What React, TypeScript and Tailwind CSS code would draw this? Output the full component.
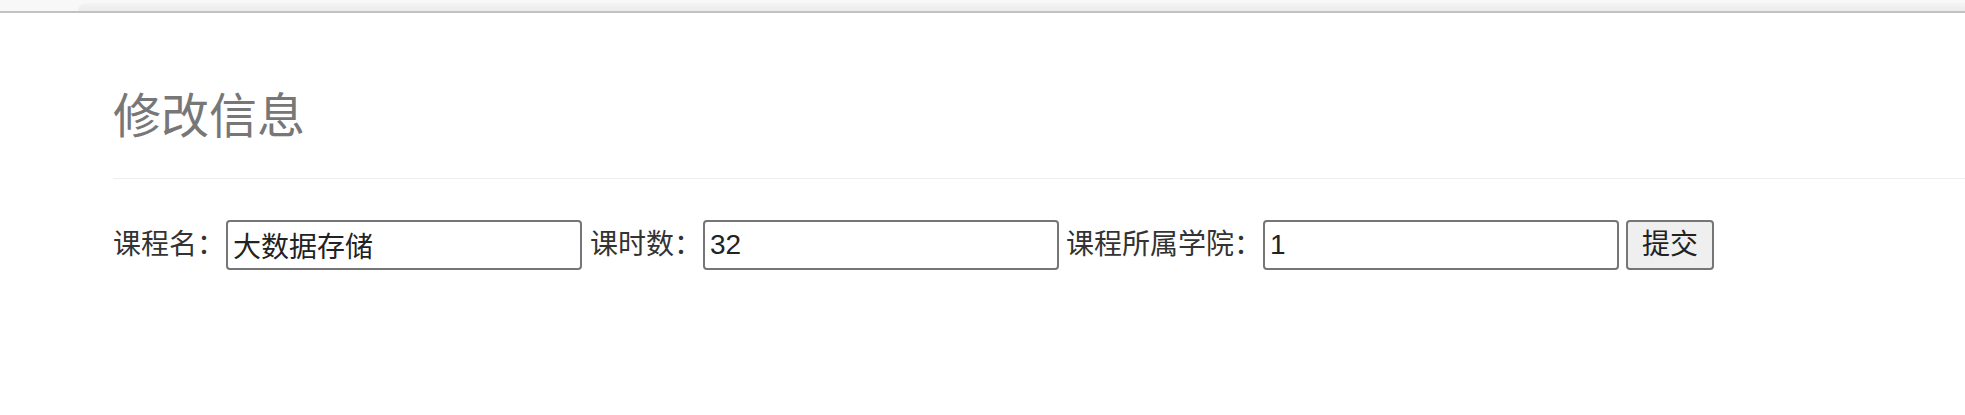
import React from "react";

function TopStrip() {
  return (
    <div className="flex h-[13px] bg-[#f8f8f8] border-b-2 border-[#c2c2c2]">
      <div className="w-[78px]" />
      <div className="flex-1 mt-[3px] rounded-tl-[14px] bg-gradient-to-b from-[#f4f4f4] to-[#ececec]" />
    </div>
  );
}

export default function App() {
  return (
    <div className="min-h-screen bg-white font-['Liberation_Sans','Noto_Sans_CJK_SC',sans-serif] text-[#333]">
      <TopStrip />
      <div className="pl-[113px]">
        <h1 className="mt-[80px] text-[48px] leading-none text-[#777] font-normal">修改信息</h1>
        <hr className="mt-[37px] border-0 h-px bg-[#eeeeee]" />

        <form className="mt-[41px] flex items-center text-[28px]" onSubmit={(e) => e.preventDefault()}>
          <label className="w-[113px] whitespace-nowrap">课程名：</label>
          <input
            defaultValue="大数据存储"
            className="w-[356px] h-[50px] mr-[8px] px-[5px] border-2 border-[#767676] rounded-[4px] text-[28px] text-[#222] outline-none"
          />
          <label className="w-[113px] whitespace-nowrap">课时数：</label>
          <input
            defaultValue="32"
            className="w-[356px] h-[50px] mr-[7px] px-[5px] border-2 border-[#767676] rounded-[4px] text-[28px] text-[#222] outline-none"
          />
          <label className="w-[197px] whitespace-nowrap">课程所属学院：</label>
          <input
            defaultValue="1"
            className="w-[356px] h-[50px] mr-[7px] px-[5px] border-2 border-[#767676] rounded-[4px] text-[28px] text-[#222] outline-none"
          />
          <button
            type="submit"
            className="w-[88px] h-[50px] bg-[#efefef] border-2 border-[#767676] rounded-[4px] text-[28px] text-[#222]"
          >
            提交
          </button>
        </form>
      </div>
    </div>
  );
}
